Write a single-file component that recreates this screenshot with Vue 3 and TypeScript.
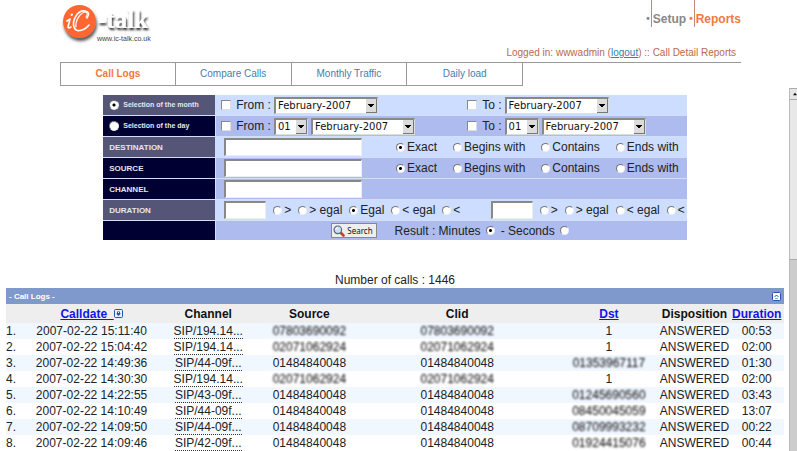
<script setup lang="ts">
import { ref } from 'vue'

interface Call {
  date: string
  channel: string
  source: string
  clid: string
  dst: string
  duration: string
  hideSource?: boolean
}

const tabs = ['Call Logs', 'Compare Calls', 'Monthly Traffic', 'Daily load']
const matches = ['Exact', 'Begins with', 'Contains', 'Ends with']
const compares = ['>', '> egal', 'Egal', '< egal', '<']
const compares2 = ['>', '> egal', '< egal', '<']

const period = ref('month')
const destMatch = ref('Exact')
const srcMatch = ref('Exact')
const durMatch = ref('Egal')
const durMatch2 = ref('')
const unit = ref('minutes')

const own = '01484840048'
const calls: Call[] = [
  { date: '2007-02-22 15:11:40', channel: 'SIP/194.14...', source: '07803690092', clid: '07803690092', dst: '1', duration: '00:53', hideSource: true },
  { date: '2007-02-22 15:04:42', channel: 'SIP/194.14...', source: '02071062924', clid: '02071062924', dst: '1', duration: '02:00', hideSource: true },
  { date: '2007-02-22 14:49:36', channel: 'SIP/44-09f...', source: own, clid: own, dst: '01353967117', duration: '01:30' },
  { date: '2007-02-22 14:30:30', channel: 'SIP/194.14...', source: '02071062924', clid: '02071062924', dst: '1', duration: '02:00', hideSource: true },
  { date: '2007-02-22 14:22:55', channel: 'SIP/43-09f...', source: own, clid: own, dst: '01245690560', duration: '03:43' },
  { date: '2007-02-22 14:10:49', channel: 'SIP/44-09f...', source: own, clid: own, dst: '08450045059', duration: '13:07' },
  { date: '2007-02-22 14:09:50', channel: 'SIP/44-09f...', source: own, clid: own, dst: '08709993232', duration: '00:22' },
  { date: '2007-02-22 14:09:46', channel: 'SIP/42-09f...', source: own, clid: own, dst: '01924415076', duration: '00:44' },
]
</script>

<template>
  <div class="page">
    <header class="top">
      <div class="brand-row">
        <svg class="logo" width="96" height="44" viewBox="0 0 96 44" role="img" aria-label="ic-talk">
          <defs>
            <filter id="soft" x="-20%" y="-20%" width="150%" height="150%">
              <feDropShadow dx="1" dy="3" stdDeviation="1.5" flood-color="#222" flood-opacity="0.75" />
            </filter>
            <filter id="softText" x="-20%" y="-20%" width="150%" height="160%">
              <feDropShadow dx="1" dy="2" stdDeviation="1.2" flood-color="#111" flood-opacity="0.95" />
            </filter>
          </defs>
          <circle cx="19.500" cy="19.500" r="16.500" fill="#ff6633" filter="url(#soft)" />
          <g fill="none" stroke="#fff" stroke-linecap="round" stroke-linejoin="round">
            <path d="M7 19 L10 17 L8 25 Q8 27 11 25" stroke-width="1.600" />
            <path d="M11.500 13 L12 12.500" stroke-width="2" />
            <path d="M27 16 Q31 10 25 9 C17 8 12 19 14 25 C16 31 24 29 29 23" stroke-width="1.600" />
            <path d="M26 15 Q29 11 25 10 C20 11 15 19 16 25" stroke-width="1.200" />
          </g>
          <text class="wordmark" x="38" y="26" filter="url(#softText)">-talk</text>
          <text class="site" x="37" y="39">www.ic-talk.co.uk</text>
        </svg>
        <nav class="sections" aria-label="Sections">
          <span class="dot">•</span><a href="#setup" class="section">Setup</a>
          <span class="dot hot">•</span><a href="#reports" class="section active">Reports</a>
        </nav>
      </div>
      <p class="status">Logged in: wwwadmin (<a href="#logout">logout</a>) :: Call Detail Reports</p>
      <nav class="tabs" aria-label="Reports">
        <a v-for="(t, i) in tabs" :key="t" href="#" :class="{ current: i === 0 }">{{ t }}</a>
      </nav>
    </header>

    <div class="frame">
      <main class="content">
        <form class="filters" @submit.prevent>
          <div class="row odd">
            <label class="name pick"><input v-model="period" type="radio" name="period" value="month" />Selection of the month</label>
            <div class="value dates">
              <div class="date">
                <label><input type="checkbox" />From :</label>
                <select class="month" aria-label="From month"><option>February-2007</option></select>
              </div>
              <div class="date">
                <label><input type="checkbox" />To :</label>
                <select class="month" aria-label="To month"><option>February-2007</option></select>
              </div>
            </div>
          </div>
          <div class="row">
            <label class="name pick"><input v-model="period" type="radio" name="period" value="day" />Selection of the day</label>
            <div class="value dates">
              <div class="date">
                <label><input type="checkbox" />From :</label>
                <select class="day" aria-label="From day"><option>01</option></select>
                <select class="month" aria-label="From day month"><option>February-2007</option></select>
              </div>
              <div class="date">
                <label><input type="checkbox" />To :</label>
                <select class="day" aria-label="To day"><option>01</option></select>
                <select class="month" aria-label="To day month"><option>February-2007</option></select>
              </div>
            </div>
          </div>
          <div class="row odd">
            <label class="name" for="dest">DESTINATION</label>
            <div class="value">
              <input id="dest" type="text" class="wide" />
              <div class="options">
                <label v-for="m in matches" :key="m"><input v-model="destMatch" type="radio" name="dest" :value="m" />{{ m }}</label>
              </div>
            </div>
          </div>
          <div class="row">
            <label class="name" for="src">SOURCE</label>
            <div class="value">
              <input id="src" type="text" class="wide" />
              <div class="options">
                <label v-for="m in matches" :key="m"><input v-model="srcMatch" type="radio" name="src" :value="m" />{{ m }}</label>
              </div>
            </div>
          </div>
          <div class="row">
            <label class="name" for="chan">CHANNEL</label>
            <div class="value"><input id="chan" type="text" class="wide" /></div>
          </div>
          <div class="row odd">
            <label class="name" for="dur">DURATION</label>
            <div class="value durations">
              <div class="compare">
                <input id="dur" type="text" class="short" />
                <label v-for="c in compares" :key="c"><input v-model="durMatch" type="radio" name="dur" :value="c" />{{ c }}</label>
              </div>
              <div class="compare">
                <input type="text" class="short" aria-label="Second duration" />
                <label v-for="c in compares2" :key="c"><input v-model="durMatch2" type="radio" name="dur2" :value="c" />{{ c }}</label>
              </div>
            </div>
          </div>
          <div class="row last">
            <div class="name"></div>
            <div class="value result">
              <button type="submit" class="search">
                <svg width="12" height="12" viewBox="0 0 12 12" aria-hidden="true">
                  <path d="M7 7 L10.500 10.500" stroke="#b8432f" stroke-width="2.600" stroke-linecap="round" />
                  <circle cx="4.800" cy="4.800" r="3.800" fill="#c7e2f6" stroke="#55697c" stroke-width="1.200" />
                  <path d="M2.800 4.500 Q3.200 2.800 5 2.700" fill="none" stroke="#fff" stroke-width="1.200" />
                </svg>
                Search
              </button>
              <div class="units">
                <label>Result : Minutes<input v-model="unit" type="radio" name="unit" value="minutes" /></label>
                <label>- Seconds<input v-model="unit" type="radio" name="unit" value="seconds" /></label>
              </div>
            </div>
          </div>
        </form>

        <p class="count">Number of calls : 1446</p>

        <section class="log">
          <div class="bar">
            <h2>- Call Logs -</h2>
            <button type="button" class="fold" aria-label="Fold call logs">
              <svg width="9" height="9" viewBox="0 0 9 9" aria-hidden="true">
                <rect x="0.500" y="0.500" width="8" height="8" rx="1" fill="#fff" stroke="#2456a8" />
                <path d="M2.500 5 L4.500 3 L6.500 5" fill="none" stroke="#2456a8" />
                <path d="M3 6.500 H6" stroke="#8aa8d8" />
              </svg>
            </button>
          </div>
          <table>
            <colgroup>
              <col class="c-num" /><col class="c-date" /><col class="c-chan" /><col class="c-src" />
              <col class="c-clid" /><col class="c-dst" /><col class="c-disp" /><col class="c-dur" />
            </colgroup>
            <thead>
              <tr>
                <th></th>
                <th>
                  <a href="#calldate">Calldate&nbsp;
                    <svg width="9" height="9" viewBox="0 0 9 9" aria-hidden="true">
                      <rect x="0.500" y="0.500" width="8" height="8" rx="1" fill="#e8f1fb" stroke="#2456a8" />
                      <path d="M3 2.500 H6 V4.500 H7 L4.500 7 L2 4.500 H3 Z" fill="#2456a8" />
                      <path d="M4 3.500 H5" stroke="#fff" />
                    </svg>
                  </a>
                </th>
                <th>Channel</th>
                <th>Source</th>
                <th>Clid</th>
                <th><a href="#dst">Dst</a></th>
                <th>Disposition</th>
                <th><a href="#duration">Duration</a></th>
              </tr>
            </thead>
            <tbody>
              <tr v-for="(c, i) in calls" :key="i">
                <td class="num">{{ i + 1 }}.</td>
                <td>{{ c.date }}</td>
                <td><span class="chan">{{ c.channel }}</span></td>
                <td><span :class="{ smudge: c.hideSource }">{{ c.source }}</span></td>
                <td><span :class="{ smudge: c.hideSource }">{{ c.clid }}</span></td>
                <td><span :class="{ smudge: c.dst !== '1' }">{{ c.dst }}</span></td>
                <td>ANSWERED</td>
                <td>{{ c.duration }}</td>
              </tr>
            </tbody>
          </table>
        </section>
      </main>
      <div class="scroll" aria-hidden="true">
        <span class="up">
          <svg width="7" height="4" viewBox="0 0 7 4"><path d="M0 4 L3.500 0 L7 4 Z" fill="#111" /></svg>
        </span>
        <span class="thumb"></span>
      </div>
    </div>
  </div>
</template>

<style>
body {
  margin: 0;
  background: #fff;
}
</style>

<style scoped>
* {
  box-sizing: border-box;
}
.page {
  display: flex;
  flex-direction: column;
  height: 100vh;
  overflow: hidden;
  font: 12px/16px "Liberation Sans", Arial, sans-serif;
  color: #222;
}
.top {
  flex: none;
  margin: 0 56px 0 60px;
}
.brand-row {
  display: flex;
  justify-content: space-between;
  align-items: flex-start;
  height: 46px;
}
.logo {
  margin-top: 2px;
}
.wordmark {
  font: bold 25px "Liberation Serif", serif;
  fill: #fff;
}
.site {
  font: 7px "Liberation Sans", Arial, sans-serif;
  fill: #444;
}
.sections {
  display: flex;
  height: 27px;
  font-weight: bold;
}
.dot {
  padding: 11px 1px 0 3px;
  font-size: 10px;
  color: #888;
}
.dot.hot {
  color: #ee7a40;
}
.section {
  padding: 11px 0 0 1px;
  border-left: 1px solid #c08878;
  color: #888;
  text-decoration: none;
}
.section.active {
  color: #ee7a40;
}
.status {
  margin: 0;
  padding-right: 5px;
  height: 16px;
  font-size: 10px;
  line-height: 13px;
  text-align: right;
  color: #b9694f;
}
.status a {
  color: #3380b0;
}
.tabs {
  display: flex;
  border-top: 1px solid #999;
}
.tabs a {
  width: 17%;
  height: 23px;
  border: solid #999;
  border-width: 0 1px 1px 0;
  font-size: 10px;
  line-height: 22px;
  text-align: center;
  text-decoration: none;
  color: #3f80ad;
}
.tabs a:first-child {
  border-left-width: 1px;
}
.tabs .current {
  font-weight: bold;
  color: #ee7a40;
}
.frame {
  display: flex;
  flex: 1;
  min-height: 0;
  margin-top: 2px;
}
.content {
  flex: 1;
  min-width: 0;
  overflow: hidden;
  padding: 7px 5px 0 6px;
}
.filters {
  width: 75%;
  max-width: 720px;
  margin: 0 auto;
}
.row {
  display: grid;
  grid-template-columns: 112px 1fr;
  column-gap: 1px;
  height: 21px;
  border-bottom: 1px solid #d3dff8;
  background: #d3dff8;
}
.row.last {
  border-bottom: 0;
  height: 19px;
}
.name {
  display: flex;
  align-items: center;
  padding: 2px 0 0 6px;
  background: #000033;
  color: #e6e6ee;
  font-size: 8px;
  font-weight: bold;
  line-height: 10px;
}
.pick {
  gap: 4px;
  padding-top: 0;
  font-size: 7px;
}
.odd .name {
  background: #555577;
}
.value {
  display: flex;
  align-items: center;
  justify-content: space-between;
  padding: 0 8px;
  background: #aebbee;
  white-space: nowrap;
}
.odd .value {
  background: #ccddff;
}
.value label {
  display: flex;
  align-items: center;
  gap: 2px;
}
.value.dates {
  display: grid;
  grid-template-columns: 246px 1fr;
  padding: 0 0 0 5px;
}
.date {
  display: flex;
  align-items: center;
  gap: 3px;
}
.date label {
  gap: 5px;
}
input,
select,
button {
  margin: 0;
  border-radius: 0;
}
input[type="text"] {
  height: 18px;
  border: 1px solid #eee;
  border-top: 2px solid #888;
  border-left: 2px solid #888;
  background: #fff;
  font: inherit;
  padding: 0 2px;
}
.wide {
  width: 138px;
}
.short {
  width: 42px;
}
input[type="checkbox"] {
  appearance: none;
  width: 10px;
  height: 10px;
  border: 1px solid #ddd;
  border-top-color: #888;
  border-left-color: #888;
  background: #fff;
}
input[type="radio"] {
  appearance: none;
  flex: none;
  width: 9px;
  height: 9px;
  border: 1px solid #eee;
  border-top-color: #777;
  border-left-color: #777;
  border-radius: 50%;
  background: #fff;
}
input[type="radio"]:checked {
  background: radial-gradient(circle, #000 0 1px, #fff 2px);
}
.pick input[type="radio"] {
  width: 10px;
  height: 10px;
}
select {
  appearance: none;
  height: 17px;
  padding: 0 2px;
  border: 1px solid #ddd;
  border-top: 2px solid #888;
  border-left: 2px solid #888;
  font: 10px/13px "DejaVu Sans", sans-serif;
  color: #111;
  background:
    linear-gradient(#000, #000) right 3px top 5px / 6px 1px no-repeat,
    linear-gradient(#000, #000) right 4px top 6px / 4px 1px no-repeat,
    linear-gradient(#000, #000) right 5px top 7px / 2px 1px no-repeat,
    linear-gradient(#dcdcdc, #dcdcdc) right 1px top 0 / 10px 13px no-repeat,
    linear-gradient(#777, #777) right 0 top 0 / 11px 14px no-repeat,
    #fff;
}
.month {
  width: 104px;
}
.day {
  width: 34px;
}
.options {
  display: flex;
  gap: 16px;
}
.value.durations {
  padding-right: 2px;
}
.compare {
  display: flex;
  align-items: center;
  gap: 7px;
}
.value.result {
  justify-content: flex-start;
  gap: 18px;
  padding-left: 115px;
}
.search {
  display: flex;
  align-items: center;
  gap: 2px;
  height: 15px;
  padding: 0 3px 0 1px;
  border: 1px solid #888;
  background: #eee;
  font: 8px/12px "Noto Sans", sans-serif;
  color: #111;
}
.units {
  display: flex;
  gap: 6px;
}
.units label {
  gap: 5px;
}
.count {
  margin: 32px 0 0;
  text-align: center;
}
.bar {
  display: flex;
  align-items: center;
  justify-content: space-between;
  height: 16px;
  padding: 0 3px;
  background: #8099cc;
}
.bar h2 {
  margin: 0;
  padding-top: 2px;
  font-size: 8px;
  line-height: 10px;
  color: #fff;
}
.fold {
  display: flex;
  padding: 0;
  border: 0;
  background: none;
}
table {
  width: 100%;
  table-layout: fixed;
  border-collapse: collapse;
  white-space: nowrap;
}
.c-num { width: 3%; }
.c-date { width: 16%; }
.c-chan { width: 14%; }
.c-src { width: 12%; }
.c-clid { width: 26%; }
.c-dst { width: 13%; }
.c-disp { width: 9%; }
.c-dur { width: 7%; }
th,
td {
  padding: 0;
  text-align: center;
}
th {
  height: 19px;
  background: #eee;
  color: #111;
}
th a {
  color: #1414e6;
}
td {
  height: 16px;
}
.num {
  text-align: left;
}
tbody tr:nth-child(odd) {
  background: #f0f7ff;
}
.chan {
  display: inline-block;
  height: 16px;
  border-bottom: 1px dotted #333;
}
.smudge {
  filter: blur(1px);
  color: #000;
}
.scroll {
  flex: none;
  width: 8px;
  display: flex;
  flex-direction: column;
  overflow: hidden;
  background: #ccc;
  border-left: 1px solid #bbb;
}
.up {
  display: flex;
  align-items: center;
  flex: none;
  height: 12px;
  padding-left: 3px;
  border: 1px solid #aaa;
  border-width: 1px 0;
  background: #e6e6e6;
}
.thumb {
  height: 44%;
  border-bottom: 1px solid #aaa;
  background: #e8e8e8;
}
</style>
